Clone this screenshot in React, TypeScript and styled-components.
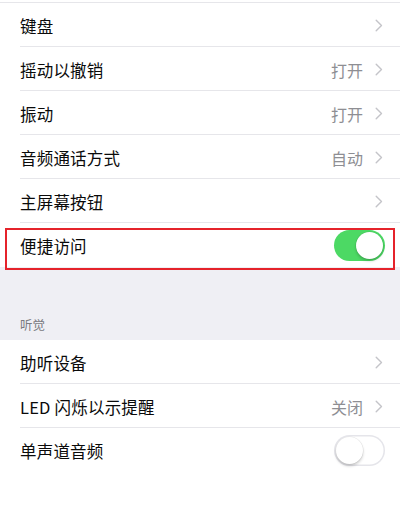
import React from "react";
import styled, { createGlobalStyle } from "styled-components";

const Global = createGlobalStyle`
  html, body { margin: 0; padding: 0; background: #ffffff; }
  body { font-family: "Noto Sans CJK SC", "Noto Sans", sans-serif; -webkit-font-smoothing: antialiased; }
  * { box-sizing: border-box; }
`;

const Page = styled.div`
  width: 400px;
  height: 518px;
  background: #ffffff;
  display: flex;
  flex-direction: column;
  overflow: hidden;
`;

const TopSpacer = styled.div`
  height: 2px;
  flex: none;
`;

const Group = styled.div<{ $topBorder?: boolean }>`
  display: flex;
  flex-direction: column;
  background: #ffffff;
  border-top: ${(p) => (p.$topBorder ? "1px solid #e6e6ea" : "none")};
`;

const Row = styled.div<{ $last?: boolean }>`
  position: relative;
  height: 44px;
  flex: none;
  display: flex;
  align-items: center;
  padding: 0 17px 0 20px;
  &::after {
    content: "";
    display: ${(p) => (p.$last ? "none" : "block")};
    position: absolute;
    left: 20px;
    right: 0;
    bottom: 0;
    height: 1px;
    background: #e6e6ea;
  }
`;

const Label = styled.span`
  flex: 1;
  font-size: 16.5px;
  color: #0a0a0a;
  letter-spacing: 0.2px;
  line-height: 1;
  padding-top: 2px;
`;

const Value = styled.span`
  font-size: 16px;
  color: #8e8e93;
  margin-right: 12px;
  line-height: 1;
  padding-top: 2px;
`;

const Highlight = styled.div`
  position: absolute;
  left: 5px;
  right: 5px;
  top: 5px;
  bottom: -3px;
  border: 2px solid #e5232b;
  pointer-events: none;
`;

const Section = styled.div`
  height: 73px;
  flex: none;
  background: #efeff4;
  display: flex;
  align-items: flex-end;
  padding: 0 0 9px 20px;
`;

const SectionTitle = styled.span`
  font-size: 12.5px;
  color: #7a7a80;
  line-height: 1;
`;

const Toggle = styled.div<{ $on?: boolean }>`
  position: relative;
  width: 51px;
  height: 31px;
  border-radius: 16px;
  margin-right: -2px;
  background: ${(p) => (p.$on ? "#4cd964" : "#ffffff")};
  box-shadow: ${(p) => (p.$on ? "none" : "inset 0 0 0 1.5px #e5e5ea")};
`;

const Knob = styled.div<{ $on?: boolean }>`
  position: absolute;
  top: 2px;
  left: ${(p) => (p.$on ? "22px" : "2px")};
  width: 27px;
  height: 27px;
  border-radius: 50%;
  background: #ffffff;
  box-shadow: 0 2px 3px rgba(0, 0, 0, 0.2), 0 0 0 0.5px rgba(0, 0, 0, 0.08);
`;

const Chevron = () => (
  <svg width="8" height="13" viewBox="0 0 8 13" style={{ flex: "none" }}>
    <path d="M1.2 1.2 L6.5 6.5 L1.2 11.8" fill="none" stroke="#c4c4c9" strokeWidth="1.4" strokeLinecap="round" strokeLinejoin="round" />
  </svg>
);

type Item = { label: string; value?: string; toggle?: boolean; on?: boolean; highlight?: boolean };

const group1: Item[] = [
  { label: "键盘" },
  { label: "摇动以撤销", value: "打开" },
  { label: "振动", value: "打开" },
  { label: "音频通话方式", value: "自动" },
  { label: "主屏幕按钮" },
  { label: "便捷访问", toggle: true, on: true, highlight: true },
];

const group2: Item[] = [
  { label: "助听设备" },
  { label: "LED 闪烁以示提醒", value: "关闭" },
  { label: "单声道音频", toggle: true, on: false },
];

const renderRows = (items: Item[]) =>
  items.map((it, i) => (
    <Row key={it.label} $last={i === items.length - 1}>
      <Label>{it.label}</Label>
      {it.toggle ? (
        <Toggle $on={it.on}>
          <Knob $on={it.on} />
        </Toggle>
      ) : (
        <>
          {it.value && <Value>{it.value}</Value>}
          <Chevron />
        </>
      )}
      {it.highlight && <Highlight />}
    </Row>
  ));

export default function App() {
  return (
    <Page>
      <Global />
      <TopSpacer />
      <Group $topBorder>{renderRows(group1)}</Group>
      <Section>
        <SectionTitle>听觉</SectionTitle>
      </Section>
      <Group>{renderRows(group2)}</Group>
    </Page>
  );
}
